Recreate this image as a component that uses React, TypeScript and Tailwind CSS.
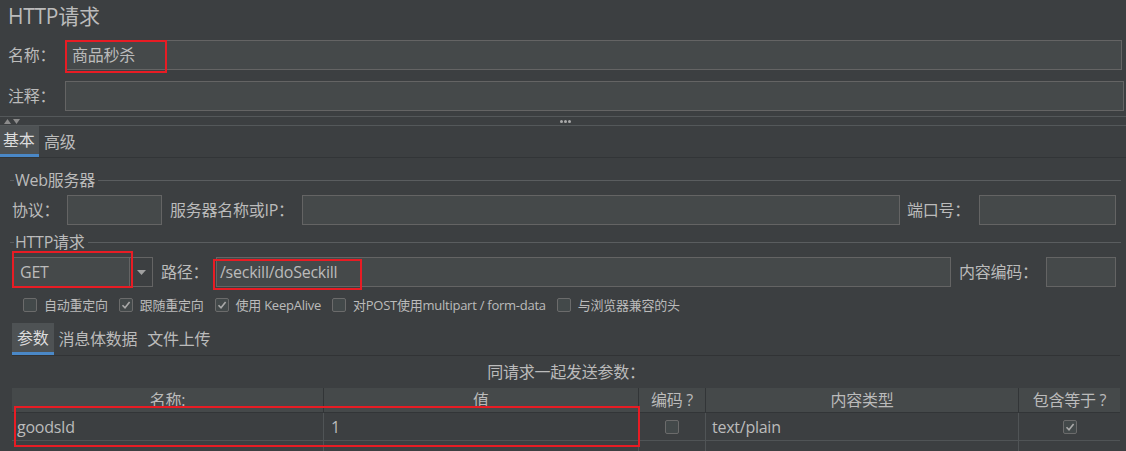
import React from 'react';

const Check = ({ checked }: { checked?: boolean }) => (
  <span className="w-[14px] h-[14px] shrink-0 border border-[#6b6b6b] bg-[#43494a] rounded-[2px] flex items-center justify-center">
    {checked && (
      <svg width="10" height="10" viewBox="0 0 10 10">
        <path d="M1.5 5.2 L4 7.8 L8.6 2" fill="none" stroke="#a9a9a9" strokeWidth="1.6" />
      </svg>
    )}
  </span>
);

const Field = ({ className }: { className: string }) => (
  <div className={`h-[30px] bg-[#45494a] border border-[#646464] ${className}`} />
);

const Legend = ({ title }: { title: string }) => (
  <div className="flex items-center h-[18px] ml-[10px] mr-[5px]">
    <div className="w-[4px] h-px bg-[#5a5d5f]" />
    <span className="px-[1px] text-[16px] leading-none">{title}</span>
    <div className="flex-1 h-px bg-[#5a5d5f] ml-[2px]" />
  </div>
);

const App = () => {
  const options = [
    { label: '自动重定向', checked: false },
    { label: '跟随重定向', checked: true },
    { label: '使用 KeepAlive', checked: true },
    { label: '对POST使用multipart / form-data', checked: false },
    { label: '与浏览器兼容的头', checked: false },
  ];

  const columns = [
    { title: '名称:', width: 'w-[312px]' },
    { title: '值', width: 'w-[315px]' },
    { title: '编码 ?', width: 'w-[67px]' },
    { title: '内容类型', width: 'w-[313px]' },
    { title: '包含等于 ?', width: 'flex-1' },
  ];

  return (
    <div className="w-[1126px] h-[451px] overflow-hidden bg-[#3c3f41] text-[#bbbbbb] tracking-[-0.25px] font-[family-name:'Open_Sans','Noto_Sans_CJK_SC',sans-serif]">
      {/* title */}
      <div className="h-[34px] flex items-center pl-[8px] text-[21px]">HTTP请求</div>

      {/* name / comment */}
      <div className="flex items-center h-[30px] mt-[6px] text-[16px]">
        <span className="w-[65px] pl-[8px]">名称：</span>
        <div className="relative w-[1057px] h-[30px] bg-[#45494a] border border-[#646464] flex items-center pl-[6px]">
          商品秒杀
          <div className="absolute left-[-1px] top-[-1px] w-[102px] h-[33px] border-2 border-[#e81c24]" />
        </div>
      </div>
      <div className="flex items-center h-[30px] mt-[11px] text-[16px]">
        <span className="w-[65px] pl-[8px]">注释：</span>
        <Field className="w-[1059px]" />
      </div>

      {/* splitter */}
      <div className="relative h-[10px] mt-[5px] border-t border-b border-[#54585a] flex items-center justify-center">
        <div className="absolute left-[4px] top-[2px] flex gap-[2px]">
          <svg width="7" height="5" viewBox="0 0 7 5"><path d="M0 5 L3.5 0 L7 5 Z" fill="#8c8c8c" /></svg>
          <svg width="7" height="5" viewBox="0 0 7 5"><path d="M0 0 L3.5 5 L7 0 Z" fill="#8c8c8c" /></svg>
        </div>
        <div className="flex gap-[1px] ml-[4px]">
          <span className="w-[3px] h-[3px] rounded-full bg-[#aaaaaa]" />
          <span className="w-[3px] h-[3px] rounded-full bg-[#aaaaaa]" />
          <span className="w-[3px] h-[3px] rounded-full bg-[#aaaaaa]" />
        </div>
      </div>

      {/* main tabs */}
      <div className="flex h-[32px] text-[16px] border-b border-[#323537]">
        <div className="w-[39px] pl-[3px] bg-[#4e5254] border-b-[3px] border-[#4a88c7] flex items-center text-[#dddddd]">基本</div>
        <div className="px-[5px] flex items-center">高级</div>
      </div>

      {/* web server */}
      <div className="mt-[13px]">
        <Legend title="Web服务器" />
      </div>
      <div className="flex items-center h-[30px] mt-[6px] text-[16px]">
        <span className="w-[67px] pl-[12px]">协议：</span>
        <Field className="w-[95px]" />
        <span className="w-[140px] pl-[8px]">服务器名称或IP：</span>
        <Field className="w-[598px]" />
        <span className="w-[79px] pl-[7px]">端口号：</span>
        <Field className="w-[137px]" />
      </div>

      {/* http request */}
      <div className="mt-[8px]">
        <Legend title="HTTP请求" />
      </div>
      <div className="flex items-center h-[30px] mt-[6px] text-[16px]">
        <div className="relative ml-[13px] w-[140px] h-[30px] flex border border-[#646464]">
          <div className="w-[116px] bg-[#45494a] border-r border-[#646464] flex items-center pl-[6px]">GET</div>
          <div className="flex-1 flex items-center justify-center">
            <svg width="9" height="5" viewBox="0 0 9 5"><path d="M0 0 L9 0 L4.5 5 Z" fill="#a0a0a0" /></svg>
          </div>
          <div className="absolute left-[-2px] top-[-7px] w-[121px] h-[37px] border-2 border-[#e81c24]" />
        </div>
        <span className="w-[63px] pl-[8px]">路径：</span>
        <div className="relative w-[735px] h-[30px] bg-[#45494a] border border-[#646464] flex items-center pl-[3px]">
          /seckill/doSeckill
          <div className="absolute left-[-4px] top-[1px] w-[149px] h-[31px] border-2 border-[#e81c24]" />
        </div>
        <span className="w-[95px] pl-[8px]">内容编码：</span>
        <Field className="w-[70px]" />
      </div>

      {/* options */}
      <div className="flex items-center h-[14px] mt-[11px] pl-[23px] gap-[11px] text-[13px] tracking-[-0.25px]">
        {options.map((o, i) => (
          <div key={i} className="flex items-center gap-[7px]">
            <Check checked={o.checked} />
            <span className="leading-none">{o.label}</span>
          </div>
        ))}
      </div>

      {/* param tabs */}
      <div className="mt-[11px] ml-[12px] mr-[6px] flex h-[33px] text-[16px] border-b border-[#313335]">
        <div className="px-[5px] bg-[#4e5254] border-b-[3px] border-[#4a88c7] flex items-center text-[#dddddd]">参数</div>
        <div className="px-[5px] flex items-center">消息体数据</div>
        <div className="px-[5px] flex items-center">文件上传</div>
      </div>

      <div className="h-[32px] flex items-center justify-center text-[16px] pl-[12px] pr-[6px]">同请求一起发送参数：</div>

      {/* table */}
      <div className="relative ml-[12px] mr-[6px] text-[16px]">
        <div className="flex h-[25px] bg-[#45494a] border-b border-[#323537]">
          {columns.map((c, i) => (
            <div key={i} className={`${c.width} flex items-center justify-center ${i < 4 ? 'border-r border-[#323537]' : ''}`}>
              {c.title}
            </div>
          ))}
        </div>
        <div className="flex h-[28px] border-b border-[#505456]">
          <div className="w-[312px] border-r border-[#505456] flex items-center pl-[5px]">goodsId</div>
          <div className="w-[315px] border-r border-[#505456] flex items-center pl-[7px]">1</div>
          <div className="w-[67px] border-r border-[#505456] flex items-center justify-center"><Check /></div>
          <div className="w-[313px] border-r border-[#505456] flex items-center pl-[6px]">text/plain</div>
          <div className="flex-1 flex items-center justify-center"><Check checked /></div>
        </div>
        <div className="flex h-[28px]">
          <div className="w-[312px] border-r border-[#505456]" />
          <div className="w-[315px] border-r border-[#505456]" />
          <div className="w-[67px] border-r border-[#505456]" />
          <div className="w-[313px] border-r border-[#505456]" />
          <div className="flex-1" />
        </div>
        <div className="absolute left-[2px] top-[18px] w-[626px] h-[41px] border-2 border-[#e81c24]" />
      </div>
    </div>
  );
};

export default App;
